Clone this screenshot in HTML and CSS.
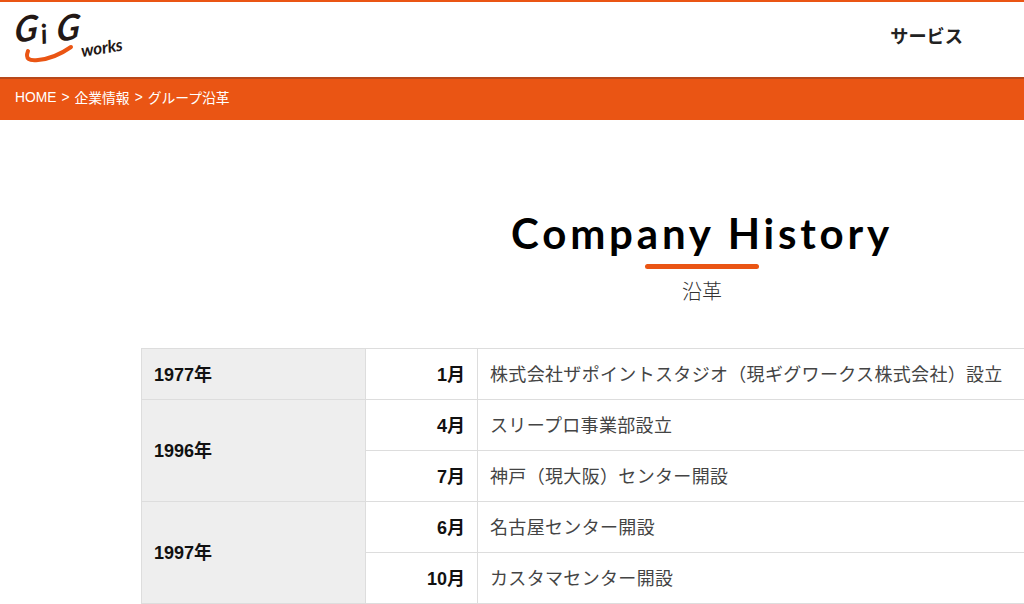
FILE: index.html
```html
<!DOCTYPE html>
<html lang="ja">
<head>
<meta charset="utf-8">
<title>Company History</title>
<link rel="stylesheet" href="styles.css">
</head>
<body>
<div class="page">
  <header class="site-header">
    <a class="logo" href="#">
      <svg width="124" height="56" viewBox="0 0 124 56" class="logo-svg">
        <text class="logo-big" transform="translate(-1 30) rotate(-8) skewX(-12)">G</text>
        <text class="logo-big logo-i" transform="translate(27 31) rotate(-8)">i</text>
        <text class="logo-big" transform="translate(41 29) rotate(-8) skewX(-12)">G</text>
        <text class="logo-small" transform="translate(67 44) rotate(-9)">works</text>
        <path class="logo-smile" d="M13 38 C10 46 14 48 23 47 C35 46 46 41 56 34" />
      </svg>
    </a>
    <nav class="nav"><a href="#">サービス</a></nav>
  </header>
  <div class="breadcrumb">
    <a href="#">HOME</a><span class="sep">&gt;</span><a href="#">企業情報</a><span class="sep">&gt;</span><span>グループ沿革</span>
  </div>
  <main class="content">
    <div class="heading">
      <h1>Company History</h1>
      <div class="rule"></div>
      <p class="sub">沿革</p>
    </div>
    <table class="history">
      <colgroup><col class="c-year"><col class="c-month"><col></colgroup>
      <tr><th class="year">1977年</th><th class="month">1月</th><td>株式会社ザポイントスタジオ（現ギグワークス株式会社）設立</td></tr>
      <tr><th class="year" rowspan="2">1996年</th><th class="month">4月</th><td>スリープロ事業部設立</td></tr>
      <tr><th class="month">7月</th><td>神戸（現大阪）センター開設</td></tr>
      <tr><th class="year" rowspan="2">1997年</th><th class="month">6月</th><td>名古屋センター開設</td></tr>
      <tr><th class="month">10月</th><td>カスタマセンター開設</td></tr>
    </table>
  </main>
</div>
</body>
</html>
```
FILE: styles.css
```css
html, body {
  margin: 0;
  padding: 0;
  height: 604px;
  overflow: hidden;
  background: #fff;
}
body {
  font-family: "Liberation Sans", "Noto Sans CJK JP", sans-serif;
  color: #333;
}
a { color: inherit; text-decoration: none; }
.page { width: 1404px; }
.site-header {
  height: 75px;
  border-top: 2px solid #ea5514;
  display: flex;
  align-items: center;
  justify-content: space-between;
  padding: 0 441px 0 15px;
}
.logo { display: block; height: 56px; margin-top: 2px; }
.logo-svg { display: block; }
.logo-big {
  font-family: Lato, sans-serif;
  font-style: italic;
  font-weight: 700;
  font-size: 35px;
  fill: #231815;
}
.logo-i { font-size: 27px; }
.logo-small {
  font-family: Lato, sans-serif;
  font-style: italic;
  font-weight: 700;
  font-size: 17px;
  letter-spacing: -0.2px;
  fill: #231815;
}
.logo-smile {
  fill: none;
  stroke: #ea5514;
  stroke-width: 4;
  stroke-linecap: round;
}
.nav {
  font-family: "Noto Sans CJK JP", sans-serif;
  font-size: 18.2px;
  font-weight: 700;
  color: #222;
  line-height: 1;
  padding-bottom: 8px;
}
.breadcrumb {
  height: 43px;
  box-sizing: border-box;
  background: #ea5514;
  border-top: 2px solid #b8481a;
  color: #fff;
  font-size: 13.8px;
  padding: 0 15px 5px;
  display: flex;
  align-items: center;
}
.sep { margin: 0 5px; }
.content { padding: 0 141px; }
.heading { text-align: center; padding-top: 86px; }
h1 {
  margin: 0;
  font-family: Lato, sans-serif;
  font-weight: 700;
  font-size: 42px;
  line-height: 54px;
  letter-spacing: 3.8px;
  color: #000;
}
.rule {
  width: 114px;
  height: 5px;
  border-radius: 3px;
  background: #ea5514;
  margin: 4px auto 0;
}
.sub {
  margin: 8px 0 0;
  font-family: "Noto Sans CJK JP", sans-serif;
  font-weight: 300;
  font-size: 20px;
  line-height: 28px;
  color: #333;
}
.history {
  width: 1122px;
  margin-top: 43px;
  border-collapse: collapse;
  table-layout: fixed;
  font-family: "Noto Sans CJK JP", sans-serif;
}
.c-year { width: 224px; }
.c-month { width: 112px; }
.history th, .history td {
  border: 1px solid #ddd;
  height: 51px;
  padding: 0 12px 3px;
  box-sizing: border-box;
}
.history th {
  font-family: "Liberation Sans", "Noto Sans CJK JP", sans-serif;
  font-size: 18px;
  font-weight: 700;
  color: #111;
}
.history td {
  font-size: 18px;
  font-weight: 400;
  letter-spacing: 0.33px;
  color: #444;
}
.history .year { background: #eee; text-align: left; }
.history .month { background: #fff; text-align: right; }
```
